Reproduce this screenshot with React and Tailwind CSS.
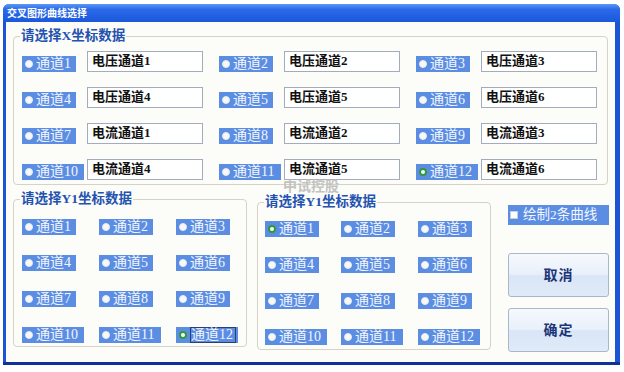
import React from "react";
import clsx from "clsx";

const xRows = [
  [["通道1", "电压通道1"], ["通道2", "电压通道2"], ["通道3", "电压通道3"]],
  [["通道4", "电压通道4"], ["通道5", "电压通道5"], ["通道6", "电压通道6"]],
  [["通道7", "电流通道1"], ["通道8", "电流通道2"], ["通道9", "电流通道3"]],
  [["通道10", "电流通道4"], ["通道11", "电流通道5"], ["通道12", "电流通道6"]],
];

const channels = [
  "通道1", "通道2", "通道3",
  "通道4", "通道5", "通道6",
  "通道7", "通道8", "通道9",
  "通道10", "通道11", "通道12",
];

function Radio({ text, checked, focus }) {
  const wide = text.length > 3;
  return (
    <div
      className={clsx(
        "flex h-[16px] items-center bg-[#5b8de2] pl-[3px]",
        wide ? "w-[62px]" : "w-[54px]"
      )}
    >
      {checked ? (
        <span className="h-[8px] w-[8px] shrink-0 rounded-full border-2 border-[#2f9a3a] bg-white" />
      ) : (
        <span className="h-[8px] w-[8px] shrink-0 rounded-full border border-[#e6e9f0] bg-[#f8f8f8]" />
      )}
      <span
        className={clsx(
          "ml-[3px] whitespace-nowrap text-[14px] leading-[14px] text-[#f3f6ff]",
          focus && "border border-[#2a3f74] pr-[2px]"
        )}
      >
        {text}
      </span>
    </div>
  );
}

function Legend({ children }) {
  return (
    <legend className="ml-[6px] px-[1px] text-[13.5px] font-bold leading-[14px] text-[#2452b0]">
      {children}
    </legend>
  );
}

function Button({ children, className }) {
  return (
    <div
      className={clsx(
        "flex h-[44px] items-center justify-center rounded-[3px] border border-[#a8b7cc] bg-[linear-gradient(180deg,#f6f9fe_0%,#e9f0fa_48%,#d9e6f7_52%,#e0eaf8_100%)] text-[14px] font-bold tracking-[1px] text-[#1b3578]",
        className
      )}
    >
      {children}
    </div>
  );
}

export default function App() {
  return (
    <div className="relative h-[372px] w-[624px] overflow-hidden bg-white font-['Liberation_Serif','Noto_Sans_CJK_SC',serif]">
      <div className="ml-[3px] mt-[4px] flex h-[361px] w-[617px] flex-col rounded-t-[6px] border-b-[3px] border-b-[#10309a] bg-[#1d54d6]">
        {/* title bar */}
        <div className="flex h-[18px] shrink-0 items-center rounded-t-[6px] bg-[linear-gradient(180deg,#5a97f7_0%,#2a6ae8_30%,#1b58dc_100%)] pl-[4px] font-['Noto_Sans_CJK_SC',sans-serif] text-[10px] font-bold leading-[10px] text-white">
          交叉图形曲线选择
        </div>

        {/* client */}
        <div className="ml-[3px] mr-[5px] flex flex-1 flex-col bg-[#fcfcf8] px-[7px] pt-[7px]">
          <fieldset className="w-[595px] rounded-[4px] border border-[#d6d3c6] px-0 pb-[4px]">
            <Legend>请选择X坐标数据</Legend>
            <div className="grid grid-cols-[181px_181px_181px] gap-x-[16px] gap-y-[15px] pl-[8px] pt-[8px]">
              {xRows.flat().map(([ch, name]) => (
                <div key={ch} className="flex items-end">
                  <div className="w-[65px]">
                    <Radio text={ch} checked={ch === "通道12"} />
                  </div>
                  <div className="h-[21px] w-[116px] border border-[#a3acbc] bg-white pl-[4px] pt-[1px] text-[13px] font-semibold leading-[16px] text-[#111]">
                    {name}
                  </div>
                </div>
              ))}
            </div>
          </fieldset>

          <div className="flex items-start">
            <fieldset className="mt-[7px] w-[233px] shrink-0 rounded-[4px] border border-[#d6d3c6] px-0 pb-[3px]">
              <Legend>请选择Y1坐标数据</Legend>
              <div className="grid grid-cols-[77px_77px_70px] gap-y-[20px] pl-[8px] pt-[13px]">
                {channels.map((ch) => (
                  <Radio
                    key={ch}
                    text={ch}
                    checked={ch === "通道12"}
                    focus={ch === "通道12"}
                  />
                ))}
              </div>
            </fieldset>

            <fieldset className="ml-[10px] mt-[10px] w-[234px] shrink-0 rounded-[4px] border border-[#d6d3c6] px-0 pb-[4px]">
              <Legend>请选择Y1坐标数据</Legend>
              <div className="grid grid-cols-[76px_77px_70px] gap-y-[20px] pl-[7px] pt-[12px]">
                {channels.map((ch) => (
                  <Radio key={ch} text={ch} checked={ch === "通道1"} />
                ))}
              </div>
            </fieldset>

            <div className="ml-[17px] mt-[20px] flex w-[101px] shrink-0 flex-col">
              <div className="flex h-[20px] items-center bg-[#5b8de2] pl-[2px]">
                <span className="h-[8px] w-[8px] shrink-0 border border-[#c8cdd8] bg-white" />
                <span className="ml-[5px] whitespace-nowrap text-[13.5px] leading-[14px] text-[#f3f6ff]">
                  绘制2条曲线
                </span>
              </div>
              <Button className="mt-[28px]">取消</Button>
              <Button className="mt-[11px]">确定</Button>
            </div>
          </div>
        </div>
      </div>

      {/* watermark */}
      <div className="absolute left-[283px] top-[178px] font-['Noto_Sans_CJK_SC',sans-serif] text-[14px] font-bold leading-[14px] text-[#bdbdbd] opacity-90">
        中试控股
      </div>
    </div>
  );
}
